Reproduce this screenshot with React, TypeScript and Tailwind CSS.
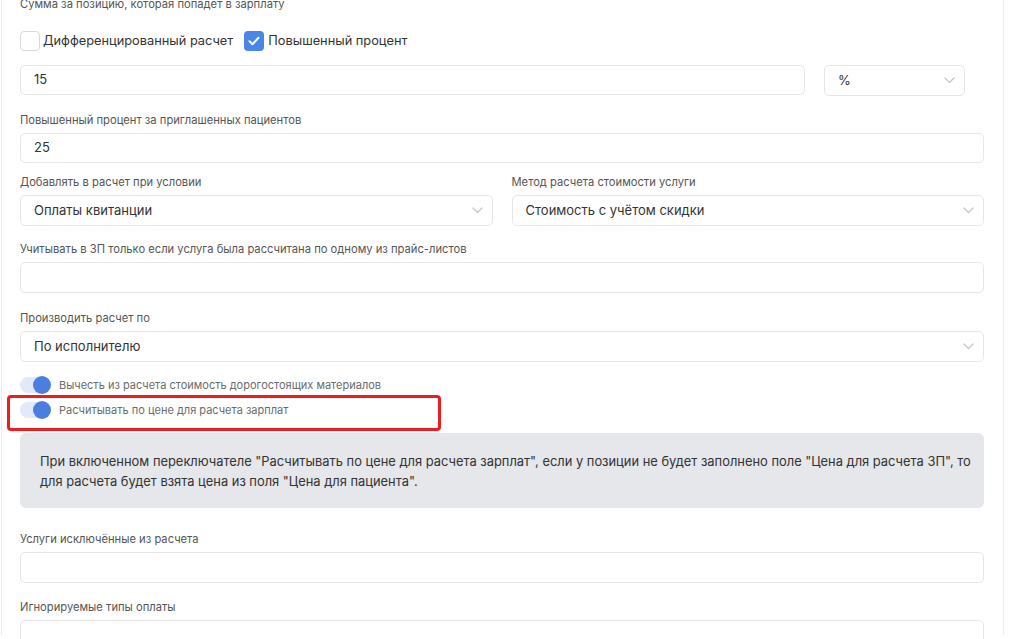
import React from 'react';

const Chevron = () => (
  <svg width="11" height="7" viewBox="0 0 11 7" fill="none" className="shrink-0">
    <path d="M1 1l4.5 4.5L10 1" stroke="#c4c4c4" strokeWidth="1.2" strokeLinecap="round" strokeLinejoin="round" />
  </svg>
);

const Label = ({ children, className = '' }: { children: React.ReactNode; className?: string }) => (
  <div className={`text-[11.2px] leading-[16px] text-[#555] ${className}`}>{children}</div>
);

const Input = ({ value = '', className = '' }: { value?: string; className?: string }) => (
  <div
    className={`flex items-center rounded-[5px] border border-[#e6e6e6] bg-white px-[13px] text-[13px] text-[#333] ${className}`}
  >
    {value}
  </div>
);

const Select = ({ value, className = '' }: { value: string; className?: string }) => (
  <div
    className={`flex h-[31px] items-center justify-between rounded-[5px] border border-[#e6e6e6] bg-white pl-[13px] pr-[9px] text-[13px] text-[#333] ${className}`}
  >
    <span>{value}</span>
    <Chevron />
  </div>
);

const Toggle = ({ text }: { text: string }) => (
  <div className="flex h-[18px] items-center gap-[9px]">
    <div className="relative h-[16px] w-[30px] rounded-full bg-[#e2eaf9]">
      <div className="absolute right-[-1px] top-[-1px] h-[18px] w-[18px] rounded-full bg-[#4a7fdf]" />
    </div>
    <span className="text-[11px] text-[#6b6b6b]">{text}</span>
  </div>
);

export default function App() {
  return (
    <div
      className="h-[639px] w-[1024px] overflow-hidden bg-white"
      style={{ fontFamily: 'Inter, "Noto Sans", sans-serif' }}
    >
      <div className="ml-[1px] h-full w-[1003px] border-x border-[#ececec] pl-[18px] pr-[19px]">
        <Label className="-mt-[4px]">Сумма за позицию, которая попадет в зарплату</Label>

        <div className="mt-[19px] flex items-center text-[12.8px] text-[#333]">
          <div className="h-[20px] w-[20px] rounded-[4px] border border-[#d8d8d8] bg-white" />
          <span className="ml-[3px]">Дифференцированный расчет</span>
          <div className="ml-[11px] flex h-[20px] w-[20px] items-center justify-center rounded-[4px] bg-[#4a86e8]">
            <svg width="12" height="10" viewBox="0 0 12 10" fill="none">
              <path d="M1.5 5.2l3 3L10.5 1.8" stroke="white" strokeWidth="2" strokeLinecap="round" strokeLinejoin="round" />
            </svg>
          </div>
          <span className="ml-[4px]">Повышенный процент</span>
        </div>

        <div className="mt-[14px] flex items-start">
          <Input value="15" className="h-[30px] w-[785px]" />
          <Select value="%" className="ml-[19px] w-[141px]" />
        </div>

        <Label className="mt-[16px]">Повышенный процент за приглашенных пациентов</Label>
        <Input value="25" className="mt-[5px] h-[30px]" />

        <div className="mt-[11px] flex gap-[19px]">
          <div className="flex-1">
            <Label>Добавлять в расчет при условии</Label>
            <Select value="Оплаты квитанции" className="mt-[5px]" />
          </div>
          <div className="flex-1">
            <Label>Метод расчета стоимости услуги</Label>
            <Select value="Стоимость с учётом скидки" className="mt-[5px]" />
          </div>
        </div>

        <Label className="mt-[15px]">Учитывать в ЗП только если услуга была рассчитана по одному из прайс-листов</Label>
        <Input className="mt-[5px] h-[31px]" />

        <Label className="mt-[17px]">Производить расчет по</Label>
        <Select value="По исполнителю" className="mt-[5px]" />

        <div className="mt-[14px]">
          <Toggle text="Вычесть из расчета стоимость дорогостоящих материалов" />
        </div>
        <div className="relative mt-[7px]">
          <Toggle text="Расчитывать по цене для расчета зарплат" />
          <div className="pointer-events-none absolute left-[-13px] top-[-6px] h-[36px] w-[434px] rounded-[4px] border-[3px] border-[#ee1c1c]" />
        </div>

        <div className="mt-[14px] rounded-[6px] bg-[#e6e7eb] pb-[16px] pl-[20px] pr-[4px] pt-[19px] text-[12.9px] leading-[20px] text-[#333]">
          При включенном переключателе "Расчитывать по цене для расчета зарплат", если у позиции не будет заполнено поле "Цена для расчета ЗП", то
          для расчета будет взята цена из поля "Цена для пациента".
        </div>

        <Label className="mt-[23px]">Услуги исключённые из расчета</Label>
        <Input className="mt-[5px] h-[31px]" />

        <Label className="mt-[16px]">Игнорируемые типы оплаты</Label>
        <Input className="mt-[5px] h-[32px]" />
      </div>
    </div>
  );
}
